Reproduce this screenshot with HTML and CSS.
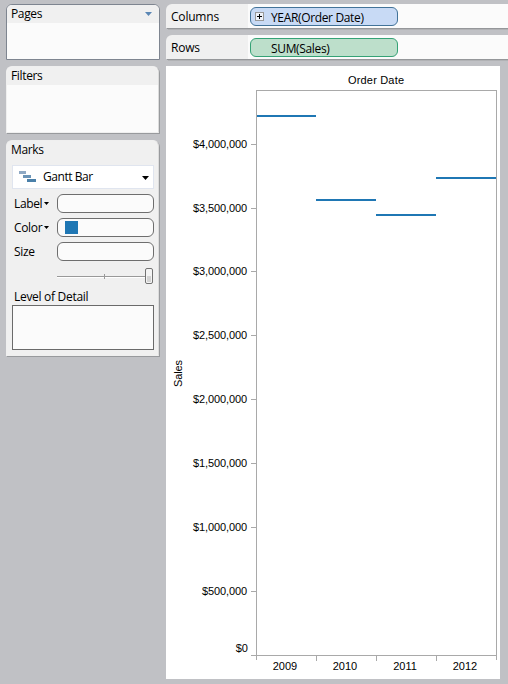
FILE: index.html
```
<!DOCTYPE html>
<html lang="en">
<head>
<meta charset="utf-8">
<title>Sales by Order Date</title>
<link rel="stylesheet" href="styles.css">
</head>
<body>
<div class="workspace">
  <aside class="sidebar">
    <section class="card pages">
      <header class="card-head"><span>Pages</span><svg class="menu-arrow" width="7" height="4" viewBox="0 0 7 4"><path d="M0 0H7L3.5 4Z" fill="#5a86b4"/></svg></header>
    </section>
    <section class="card filters">
      <header class="card-head"><span>Filters</span></header>
    </section>
    <section class="card marks">
      <header class="card-head"><span>Marks</span></header>
      <div class="mark-type">
        <svg width="17" height="11" viewBox="0 0 17 11" shape-rendering="crispEdges"><path d="M0 0h7v3H0z" fill="#8fa9c4"/><path d="M4 4h8v3H4z" fill="#6b94b7"/><path d="M8 8h9v3H8z" fill="#4a80a9"/></svg>
        <span class="mark-name">Gantt Bar</span>
        <svg class="drop" width="7" height="4" viewBox="0 0 7 4"><path d="M0 0H7L3.5 4Z"/></svg>
      </div>
      <div class="field"><span class="field-name">Label<svg width="5" height="3" viewBox="0 0 5 3"><path d="M0 0H5L2.5 3Z"/></svg></span><div class="slot"></div></div>
      <div class="field"><span class="field-name">Color<svg width="5" height="3" viewBox="0 0 5 3"><path d="M0 0H5L2.5 3Z"/></svg></span><div class="slot"><i class="swatch"></i></div></div>
      <div class="field"><span class="field-name">Size</span><div class="slot"></div></div>
      <svg class="slider" width="97" height="18" viewBox="0 0 97 18">
        <g shape-rendering="crispEdges"><path d="M0 8h88v1H0z" fill="#999"/><path d="M0 9h88v1H0z" fill="#fff"/><path d="M47 6h1v5h-1z" fill="#999"/></g>
        <rect x="88.5" y=".5" width="7" height="15" rx="1.5" fill="#f4f4f4" stroke="#737373"/><path d="M90 8h4v6h-4z" fill="#d4d4d4"/>
      </svg>
      <div class="detail-name">Level of Detail</div>
      <div class="detail-box"></div>
    </section>
  </aside>
  <main class="main">
    <div class="shelf"><span class="shelf-name">Columns</span><div class="pill blue"><svg width="9" height="9" viewBox="0 0 9 9" shape-rendering="crispEdges"><path d="M.5.5h8v8h-8z" fill="#eef2fa" stroke="#999"/><path d="M2 4h5v1H2zM4 2h1v5H4z"/></svg><span>YEAR(Order Date)</span></div></div>
    <div class="shelf"><span class="shelf-name">Rows</span><div class="pill green"><span>SUM(Sales)</span></div></div>
    <svg class="chart" width="334" height="613" viewBox="166 66 334 613">
      <g class="axis">
        <path d="M256.500 660V90.500H496.500V660M251 655.500H496.500"/>
        <path d="M251 144.500h5M251 208.500h5M251 271.500h5M251 335.500h5M251 399.500h5M251 463.500h5M251 527.500h5M251 591.500h5"/>
        <path d="M316.500 656v5M376.500 656v5M436.500 656v5"/>
      </g>
      <path class="bars" d="M257 116h59M316 200h60M376 215h60M436 178h60"/>
      <text x="348" y="84" textLength="56">Order Date</text>
      <text transform="translate(182 387) rotate(-90)" textLength="27">Sales</text>
      <g class="values">
        <text x="247" y="148" textLength="54">$4,000,000</text>
        <text x="247" y="212" textLength="54">$3,500,000</text>
        <text x="247" y="275" textLength="54">$3,000,000</text>
        <text x="247" y="339" textLength="54">$2,500,000</text>
        <text x="247" y="403" textLength="54">$2,000,000</text>
        <text x="247" y="467" textLength="54">$1,500,000</text>
        <text x="247" y="531" textLength="54">$1,000,000</text>
        <text x="247" y="595" textLength="45">$500,000</text>
        <text x="248" y="652">$0</text>
      </g>
      <g class="years">
        <text x="285" y="670">2009</text>
        <text x="345" y="670">2010</text>
        <text x="405" y="670">2011</text>
        <text x="465" y="670">2012</text>
      </g>
    </svg>
  </main>
</div>
</body>
</html>
```
FILE: styles.css
```
* { box-sizing: border-box; }
body { margin: 0; background: #c0c1c5; color: #000; font: 12px/16px "Open Sans", "Noto Sans", sans-serif; letter-spacing: -.35px; overflow: hidden; }
svg { display: block; flex: none; }
.workspace { display: flex; gap: 6px; height: 684px; padding: 4px 0 0 6px; }
.sidebar { width: 154px; flex: none; }
.card { background: #fbfbfb; border: 1px solid #efefef; border-right-color: #dcdcdc; border-radius: 6px 6px 0 0; box-shadow: 1px 1px 0 #989a9d; width: 153px; }
.card-head { display: flex; align-items: center; justify-content: space-between; height: 18px; padding: 0 7px 0 4px; background: #f0f0f0; border-radius: 5px 5px 0 0; }
.pages { width: 154px; height: 56px; border-color: #7e8590; box-shadow: none; margin-bottom: 6px; }
.filters { height: 67px; margin-bottom: 7px; }
.marks { height: 216px; background: #f0f0f0; padding: 0 4px 0 5px; }
.marks .card-head { padding-left: 0; margin-left: -1px; }
.mark-type { display: flex; align-items: center; width: 142px; height: 24px; margin: 6px 0 5px; padding: 0 4px 0 6px; background: #fff; border: 1px solid #e0e5ef; }
.mark-type > svg:first-child { margin-top: -1px; }
.drop { margin-top: 2px; }
.mark-name { flex: 1; margin-left: 7px; letter-spacing: -.45px; }
.field { display: flex; align-items: center; height: 19px; margin-bottom: 5px; padding-left: 2px; }
.field-name { display: flex; align-items: center; gap: 2px; width: 43px; flex: none; }
.slot { display: flex; align-items: center; width: 97px; height: 19px; padding-left: 7px; background: #fbfbfb; border: 1px solid #6e6e6e; border-radius: 6px; }
.swatch { width: 13px; height: 13px; background: #1f77b4; }
.slider { margin: 7px 0 0 45px; }
.detail-name { margin: 3px 0 0 2px; height: 16px; letter-spacing: -.3px; }
.detail-box { width: 142px; height: 45px; background: #fbfbfb; border: 1px solid #6a6a6a; }
.main { flex: 1; min-width: 0; }
.shelf { display: flex; align-items: center; height: 24px; margin-bottom: 7px; background: linear-gradient(90deg, #f0f0f0 82px, #fbfbfb 82px); border-radius: 6px 0 0 0; box-shadow: 1px 1px 0 #95979a, 2px 2px 0 #b1b2b5; }
.shelf-name { width: 84px; padding: 2px 0 0 5px; letter-spacing: -.2px; }
.pill { display: flex; align-items: center; width: 148px; height: 19px; padding-left: 4px; border: 1px solid; border-radius: 6px; margin-top: 1px; }
.pill span { margin: 2px 0 0 7px; }
.blue { background: #c8daf5; border-color: #427399; }
.green { background: #bddfcb; border-color: #35a276; padding-left: 13px; }
.chart { background: #fff; font: 11px "Liberation Sans", Arial, sans-serif; letter-spacing: 0; }
.axis { fill: none; stroke: #a9a9a9; shape-rendering: crispEdges; }
.bars { fill: none; stroke: #1f77b4; stroke-width: 2; shape-rendering: crispEdges; }
.values { text-anchor: end; }
.years { text-anchor: middle; }
```
